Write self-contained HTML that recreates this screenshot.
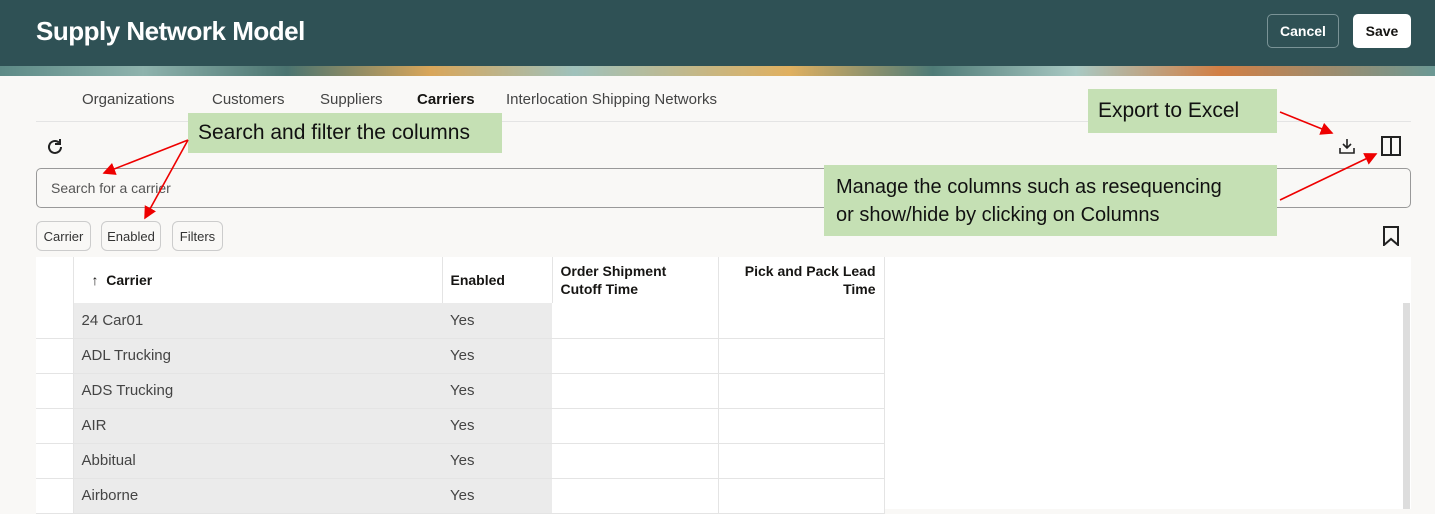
<!DOCTYPE html>
<html><head><style>
*{box-sizing:border-box;margin:0;padding:0}
body{width:1435px;height:509px;overflow:hidden;background:#f9f8f6;font-family:"Liberation Sans",sans-serif;position:relative;color:#161513}
.abs{position:absolute}
.hdr{left:0;top:0;width:1435px;height:66px;background:#2f5155}
.band{left:0;top:66px;width:1435px;height:10px;background:linear-gradient(90deg,#5d8a86 0,#8fb3ad 10%,#4b7470 20%,#d9a65a 30%,#9fc1bb 40%,#e0b060 55%,#4f7b77 65%,#a9c9c3 75%,#d27f45 85%,#6b9894 100%)}
.title{left:36px;top:16px;color:#fff;font-size:26px;font-weight:bold;letter-spacing:-0.5px}
.btn{top:14px;height:34px;border-radius:5px;font-size:14px;font-weight:bold;display:flex;align-items:center;justify-content:center}
.tab{top:91px;font-size:15px;color:#444}
.note{background:#c5e0b4;color:#111;font-size:21px;padding-left:10px;display:flex;align-items:center}
.chip{top:221px;height:30px;border:1px solid #ccc;border-radius:6px;font-size:13px;display:flex;align-items:center;justify-content:center;background:#f9f8f6;color:#333}
table{border-collapse:collapse;position:absolute;left:36px;top:257px}
td{height:35px;border-bottom:1px solid #e4e4e4;font-size:15px;color:#444;padding-left:8px}
th{height:46px;font-size:14px;font-weight:bold;text-align:left;padding-left:8px;background:#fff;border-right:1px solid #e4e4e4;line-height:18px}
.g{background:#ebebeb}
.w{background:#fff;border-right:1px solid #e4e4e4}
</style></head><body>
<div class="abs hdr"></div>
<div class="abs band"></div>
<div class="abs title">Supply Network Model</div>
<div class="abs btn" style="left:1267px;width:72px;border:1px solid #7a9396;color:#fff">Cancel</div>
<div class="abs btn" style="left:1353px;width:58px;background:#fff;color:#161513">Save</div>
<div class="abs tab" style="left:82px">Organizations</div>
<div class="abs tab" style="left:212px">Customers</div>
<div class="abs tab" style="left:320px">Suppliers</div>
<div class="abs tab" style="left:417px;color:#161513;font-weight:bold">Carriers</div>
<div class="abs tab" style="left:506px">Interlocation Shipping Networks</div>
<div class="abs" style="left:36px;top:121px;width:1375px;height:1px;background:#e4e4e4"></div>
<svg class="abs" style="left:45px;top:137px" width="20" height="20" viewBox="0 0 20 20"><path d="M16 10a6 6 0 1 1-2-4.5" fill="none" stroke="#222" stroke-width="2"/><path d="M15 2v5h-5" fill="none" stroke="#222" stroke-width="2"/></svg>
<div class="abs" style="left:36px;top:168px;width:1375px;height:40px;border:1px solid #999;border-radius:5px;background:#f9f8f6;font-size:14px;color:#555;padding:11px 14px">Search for a carrier</div>
<div class="abs chip" style="left:36px;width:55px">Carrier</div>
<div class="abs chip" style="left:101px;width:60px">Enabled</div>
<div class="abs chip" style="left:172px;width:51px">Filters</div>
<svg class="abs" style="left:1337px;top:136px" width="20" height="20" viewBox="0 0 20 20"><path d="M10 3v9M6 8l4 4 4-4M3 12v5h14v-5" fill="none" stroke="#222" stroke-width="1.6"/></svg>
<svg class="abs" style="left:1380px;top:135px" width="22" height="22" viewBox="0 0 22 22"><rect x="2" y="2" width="18" height="18" fill="none" stroke="#222" stroke-width="2"/><path d="M11 2v18" stroke="#222" stroke-width="2"/></svg>
<svg class="abs" style="left:1382px;top:226px" width="18" height="20" viewBox="0 0 18 20"><path d="M2 1h14v18l-7-6-7 6z" fill="none" stroke="#222" stroke-width="2"/></svg>
<div class="abs" style="left:36px;top:257px;width:1375px;height:252px;background:#fff"></div>
<div class="abs" style="left:1403px;top:303px;width:7px;height:206px;background:#ddd"></div>
<table>
<tr><th style="width:37px"></th><th style="width:369px;padding-left:18px">↑&nbsp;&nbsp;Carrier</th><th style="width:110px">Enabled</th><th style="width:166px">Order Shipment<br>Cutoff Time</th><th style="width:166px;text-align:right;padding-right:8px">Pick and Pack Lead<br>Time</th></tr>
<tr><td class="w"></td><td class="g">24 Car01</td><td class="g">Yes</td><td class="w"></td><td class="w"></td></tr>
<tr><td class="w"></td><td class="g">ADL Trucking</td><td class="g">Yes</td><td class="w"></td><td class="w"></td></tr>
<tr><td class="w"></td><td class="g">ADS Trucking</td><td class="g">Yes</td><td class="w"></td><td class="w"></td></tr>
<tr><td class="w"></td><td class="g">AIR</td><td class="g">Yes</td><td class="w"></td><td class="w"></td></tr>
<tr><td class="w"></td><td class="g">Abbitual</td><td class="g">Yes</td><td class="w"></td><td class="w"></td></tr>
<tr><td class="w"></td><td class="g">Airborne</td><td class="g">Yes</td><td class="w"></td><td class="w"></td></tr>
</table>
<div class="abs note" style="left:188px;top:113px;width:314px;height:40px">Search and filter the columns</div>
<div class="abs note" style="left:1088px;top:89px;width:189px;height:44px">Export to Excel</div>
<div class="abs note" style="left:824px;top:165px;width:453px;height:71px;line-height:28px;font-size:20px;padding-left:12px">Manage the columns such as resequencing<br>or show/hide by clicking on Columns</div>
<svg class="abs" style="left:0;top:0" width="1435" height="509">
<defs><marker id="a" markerWidth="8" markerHeight="8" refX="7" refY="4" orient="auto"><path d="M0 0L8 4L0 8z" fill="#e00"/></marker></defs>
<g stroke="#e00" stroke-width="1.6" marker-end="url(#a)"><line x1="188" y1="140" x2="104" y2="173"/><line x1="188" y1="140" x2="145" y2="218"/><line x1="1280" y1="112" x2="1332" y2="133"/><line x1="1280" y1="200" x2="1376" y2="154"/></g>
</svg>
</body></html>
